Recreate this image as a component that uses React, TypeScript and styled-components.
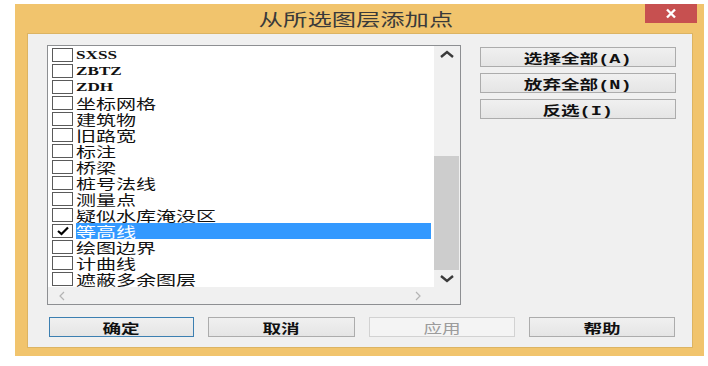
import React from 'react';
import styled, { createGlobalStyle } from 'styled-components';

const GlobalStyle = createGlobalStyle`
html, body {
    margin: 0;
    padding: 0;
    background: #fff;
    font-family: "Liberation Mono", "Noto Sans CJK SC", monospace;
}
`

const STRETCH = 1.43

const layers = [
    'SXSS', 'ZBTZ', 'ZDH', '坐标网格', '建筑物', '旧路宽', '标注', '桥梁',
    '桩号法线', '测量点', '疑似水库淹没区', '等高线', '绘图边界', '计曲线', '遮蔽多余图层',
]
const selected = '等高线'

const Frame = styled.div`
margin: 4px 0 0 15px;
width: 689px;
height: 352px;
background: #f1c46d;
display: flex;
flex-direction: column;
box-sizing: border-box;
`

const TitleBar = styled.div`
height: 29px;
position: relative;
display: flex;
align-items: center;
justify-content: center;
padding-right: 8px;
color: #3a3a3a;
font-family: "Noto Sans CJK SC", sans-serif;
font-size: 17px;
`

const Stretch = styled.span<{ $origin?: string }>`
display: inline-block;
white-space: nowrap;
transform: scaleX(${STRETCH});
transform-origin: ${p => p.$origin || 'center'} center;
`

const CloseButton = styled.div`
position: absolute;
top: 0;
right: 7px;
width: 52px;
height: 19px;
background: #c75050;
display: flex;
align-items: center;
justify-content: center;
`

const Client = styled.div`
margin: 0 11px 8px 12px;
flex: 1;
background: #f0f0f0;
border: 1px solid #dcb463;
box-sizing: border-box;
padding: 11px 16px 0 19px;
display: flex;
flex-direction: column;
`

const TopRow = styled.div`
display: flex;
gap: 19px;
`

const ListBox = styled.div`
width: 414px;
height: 260px;
border: 1px solid #8d8f92;
box-sizing: border-box;
background: #fff;
display: flex;
flex-direction: column;
`

const ListBody = styled.div`
flex: 1;
display: flex;
`

const Items = styled.div`
flex: 1;
padding-top: 1px;
display: flex;
flex-direction: column;
`

const Row = styled.div`
height: 16px;
display: flex;
align-items: center;
padding-left: 4px;
`

const Box = styled.div`
width: 21px;
height: 14px;
border: 1px solid #5a5a5a;
box-sizing: border-box;
background: #fff;
display: flex;
align-items: center;
justify-content: center;
flex-shrink: 0;
`

const Label = styled.div<{ $active?: boolean; $latin?: boolean }>`
flex: 1;
height: 16px;
margin: 0 3px 0 3px;
display: flex;
align-items: center;
font-family: ${p => (p.$latin ? '"Liberation Serif", serif' : '"Noto Sans CJK SC", sans-serif')};
font-size: ${p => (p.$latin ? 12 : 14)}px;
font-weight: ${p => (p.$latin ? 700 : 400)};
line-height: 16px;
color: ${p => (p.$active ? '#fff' : '#111')};
background: ${p => (p.$active ? '#3399ff' : 'transparent')};
`

const VScroll = styled.div`
width: 26px;
background: #f0f0f0;
display: flex;
flex-direction: column;
`

const Arrow = styled.div<{ $h?: number }>`
height: ${p => p.$h || 17}px;
display: flex;
align-items: center;
justify-content: center;
flex-shrink: 0;
`

const Track = styled.div`
flex: 1;
display: flex;
flex-direction: column;
`

const Thumb = styled.div<{ $top: number; $size: number }>`
margin: ${p => p.$top}px 1px 0 0;
height: ${p => p.$size}px;
background: #cdcdcd;
`

const HScrollRow = styled.div`
height: 17px;
display: flex;
background: #f0f0f0;
`

const HScroll = styled.div`
flex: 1;
display: flex;
align-items: center;
justify-content: space-between;
padding: 0 12px 0 10px;
`

const Corner = styled.div`
width: 26px;
`

const SideButtons = styled.div`
margin-top: 2px;
display: flex;
flex-direction: column;
gap: 6px;
`

const Button = styled.div<{ $w?: number; $default?: boolean; $disabled?: boolean }>`
width: ${p => p.$w || 196}px;
height: 20px;
box-sizing: border-box;
border: 1px solid ${p => (p.$default ? '#3c7fb1' : p.$disabled ? '#d2d2d2' : '#acacac')};
background: ${p => (p.$disabled ? '#f4f4f4' : 'linear-gradient(#f0f0f0, #e5e5e5)')};
color: ${p => (p.$disabled ? '#9c9c9c' : '#111')};
display: flex;
align-items: center;
justify-content: center;
font-size: 13px;
font-weight: ${p => (p.$disabled ? 400 : 700)};
`

const BottomRow = styled.div`
margin-top: 12px;
padding-left: 2px;
display: flex;
gap: 14px;
`

const Chevron = ({ dir, color = '#3a3a3a' }: { dir: 'up' | 'down' | 'left' | 'right'; color?: string }) => {
    const pts = {
        up: '1,7 7,2 13,7',
        down: '1,2 7,7 13,2',
        left: '6,1 2,5 6,9',
        right: '2,1 6,5 2,9',
    }[dir]
    const vertical = dir == 'up' || dir == 'down'
    return (
        <svg width={vertical ? 14 : 8} height={vertical ? 9 : 10} viewBox={vertical ? '0 0 14 9' : '0 0 8 10'}>
            <polyline points={pts} fill="none" stroke={color} strokeWidth={vertical ? 2.4 : 1.2} />
        </svg>
    )
}

const Check = () => (
    <svg width="14" height="10" viewBox="0 0 14 10">
        <polyline points="2,5 5.5,8 12,1.5" fill="none" stroke="#000" strokeWidth="2.2" />
    </svg>
)

const isLatin = (s: string) => /^[\x00-\x7f]+$/.test(s)

export default function App() {
    return (
        <>
            <GlobalStyle />
            <Frame>
                <TitleBar>
                    <Stretch>从所选图层添加点</Stretch>
                    <CloseButton>
                        <svg width="14" height="11" viewBox="0 0 14 11">
                            <path d="M3 1.5 L11 9.5 M11 1.5 L3 9.5" stroke="#fff" strokeWidth="2.4" />
                        </svg>
                    </CloseButton>
                </TitleBar>
                <Client>
                    <TopRow>
                        <ListBox>
                            <ListBody>
                                <Items>
                                    {layers.map(name => (
                                        <Row key={name}>
                                            <Box>{name == selected && <Check />}</Box>
                                            <Label $active={name == selected} $latin={isLatin(name)}>
                                                <Stretch $origin="left">{name}</Stretch>
                                            </Label>
                                        </Row>
                                    ))}
                                </Items>
                                <VScroll>
                                    <Arrow $h={17}><Chevron dir="up" /></Arrow>
                                    <Track>
                                        <Thumb $top={93} $size={114} />
                                    </Track>
                                    <Arrow $h={17}><Chevron dir="down" /></Arrow>
                                </VScroll>
                            </ListBody>
                            <HScrollRow>
                                <HScroll>
                                    <Chevron dir="left" color="#b4b4b4" />
                                    <Chevron dir="right" color="#b4b4b4" />
                                </HScroll>
                                <Corner />
                            </HScrollRow>
                        </ListBox>
                        <SideButtons>
                            <Button><Stretch>选择全部(A)</Stretch></Button>
                            <Button><Stretch>放弃全部(N)</Stretch></Button>
                            <Button><Stretch>反选(I)</Stretch></Button>
                        </SideButtons>
                    </TopRow>
                    <BottomRow>
                        <Button $w={145} $default><Stretch>确定</Stretch></Button>
                        <Button $w={147}><Stretch>取消</Stretch></Button>
                        <Button $w={146} $disabled><Stretch>应用</Stretch></Button>
                        <Button $w={146}><Stretch>帮助</Stretch></Button>
                    </BottomRow>
                </Client>
            </Frame>
        </>
    )
}
